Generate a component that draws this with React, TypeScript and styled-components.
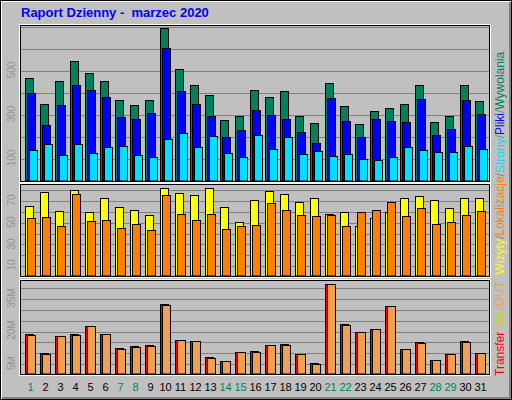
import React from "react";
import styled, { createGlobalStyle } from "styled-components";

const Global = createGlobalStyle`
  html, body { margin: 0; padding: 0; background: #fff; }
  body { font-family: "Liberation Sans", Arial, sans-serif; }
`;

const Frame = styled.div`
  width: 512px; height: 400px; box-sizing: border-box;
  background: #c0c0c0; border: 1px solid #000;
  box-shadow: inset 1px 1px 0 #fff, inset -2px -2px 0 #808080;
  display: flex; flex-direction: column; position: relative;
`;
const Title = styled.div`
  height: 22px; padding: 5px 0 0 20px; box-sizing: border-box;
  color: #0000ff; font-weight: bold; font-size: 13px; white-space: pre; line-height: 14px;
`;
const Body = styled.div`display: flex; padding-top: 1px;`;
const Charts = styled.div`display: flex; flex-direction: column; width: 490px;`;
const Row = styled.div<{ $gap: number }>`display: flex; margin-bottom: ${p => p.$gap}px;`;
const Axis = styled.svg`width: 18px; flex: none;`;
const Panel = styled.div`
  width: 468px; border: 1px solid #000; outline: 1px solid #fff; margin-left: 1px; margin-top: 1px;
  display: flex; line-height: 0;
`;
const Days = styled.div`
  display: grid; grid-template-columns: repeat(31, 15px); padding-left: 22px; margin-top: 6px;
`;
const Day = styled.span<{ $we: boolean }>`
  font-size: 11px; color: ${p => (p.$we ? "#00805c" : "#000")}; text-align: center; line-height: 12px;
`;
const Legend = styled.div`
  writing-mode: vertical-rl; transform: rotate(180deg);
  font-size: 12px; line-height: 14px; white-space: pre; margin-left: 2px; margin-top: 30px;
  height: 322px; text-align: left;
`;
const L = styled.span<{ $c: string }>`color: ${p => p.$c};`;

const d1 = [[78,93,150],[104,125,144],[81,105,155],[61,85,144],[73,90,153],[81,97,147],[100,117,146],[105,119,155],[100,113,157],[28,48,139],[69,91,133],[85,104,147],[95,116,136],[120,137,153],[116,130,157],[90,110,135],[97,115,149],[91,119,137],[116,132,154],[123,143,151],[83,98,156],[106,121,154],[124,137,159],[111,119,160],[108,121,157],[104,122,147],[85,99,150],[122,135,152],[116,129,152],[85,100,146],[101,114,149]];
const d2 = [[207,219],[193,218],[212,227],[191,195],[213,222],[199,221],[208,229],[211,225],[216,231],[189,196],[194,215],[196,221],[189,215],[208,230],[223,227],[201,226],[192,204],[195,211],[203,216],[199,217],[215,216],[213,227],[227,213],[219,211],[213,203],[199,217],[197,209],[201,225],[209,223],[199,216],[199,212]];
const d3 = [[336,337],[355,356],[338,338],[336,337],[328,328],[336,336],[350,351],[348,349],[347,348],[306,307],[342,342],[343,343],[359,360],[363,363],[354,354],[353,354],[347,347],[346,347],[356,356],[365,366],[286,286],[326,327],[334,334],[331,331],[308,308],[351,351],[344,345],[362,362],[356,356],[343,344],[355,355]];
const weekend = new Set([1,7,8,14,15,21,22,28,29]);

type ChartProps = { h: number; top: number; lines: number[]; series: number[][]; colors: string[]; offs: number[] };
const Chart = ({ h, top, lines, series, colors, offs }: ChartProps) => (
  <svg width={468} height={h}>
    {lines.map(y => <line key={y} x1={0} x2={468} y1={y - top + 0.5} y2={y - top + 0.5} stroke="#808080" />)}
    {series.map((vals, i) =>
      vals.map((v, k) => (
        <rect key={i + "-" + k} x={4 + 15 * i + offs[k] + 0.5} y={v - top + 0.5} width={8} height={h - (v - top) - 0.5}
          fill={colors[k]} stroke="#000" strokeWidth={1} />
      ))
    )}
  </svg>
);

const AxisLabels = ({ h, top, labels }: { h: number; top: number; labels: [string, number][] }) => (
  <Axis height={h + 2}>
    {labels.map(([t, y]) => (
      <text key={t} transform={`translate(14 ${y - top + 1}) rotate(-90)`} textAnchor="middle" fontSize={10}
        fill="#909090" fontFamily="Liberation Sans, Arial, sans-serif">{t}</text>
    ))}
  </Axis>
);

const range = (a: number, b: number, s: number) => { const r: number[] = []; for (let y = a; y >= b; y -= s) r.push(Math.round(y)); return r; };

export default function App() {
  return (
    <>
      <Global />
      <Frame>
        <Title>Raport Dzienny -  marzec 2020</Title>
        <Body>
          <Charts>
            <Row $gap={1}>
              <AxisLabels h={155} top={26} labels={[["500", 71], ["300", 115], ["100", 159]]} />
              <Panel><Chart h={155} top={26} lines={range(159, 27, 22)} series={d1} colors={["#00805c", "#0000ff", "#00e0ff"]} offs={[0, 2, 4]} /></Panel>
            </Row>
            <Row $gap={2}>
              <AxisLabels h={91} top={186} labels={[["10", 267], ["30", 246], ["50", 224], ["70", 202]]} />
              <Panel><Chart h={91} top={186} lines={range(267, 188, 10.8)} series={d2} colors={["#ffff00", "#ff8000"]} offs={[0, 2]} /></Panel>
            </Row>
            <Row $gap={0}>
              <AxisLabels h={93} top={283} labels={[["5M", 366], ["20M", 333], ["35M", 301]]} />
              <Panel><Chart h={93} top={283} lines={range(366, 284, 10.8)} series={d3} colors={["#ff0000", "#f0a050"]} offs={[0, 2]} /></Panel>
            </Row>
            <Days>
              {Array.from({ length: 31 }, (_, i) => <Day key={i} $we={weekend.has(i + 1)}>{i + 1}</Day>)}
            </Days>
          </Charts>
          <Legend>
            <L $c="#ff0000">Transfer</L><L $c="#d0d000"> /IN</L><L $c="#f0a050"> /OUT</L>
            <L $c="#ffff00">  Wizyty</L><L $c="#808080">/</L><L $c="#ff8000">Lokalizacje</L><L $c="#808080">/</L>
            <L $c="#00e0ff">Strony</L><L $c="#808080">/</L><L $c="#0000ff">Pliki</L><L $c="#808080">/</L><L $c="#00805c">Wywolania</L>
          </Legend>
        </Body>
      </Frame>
    </>
  );
}
